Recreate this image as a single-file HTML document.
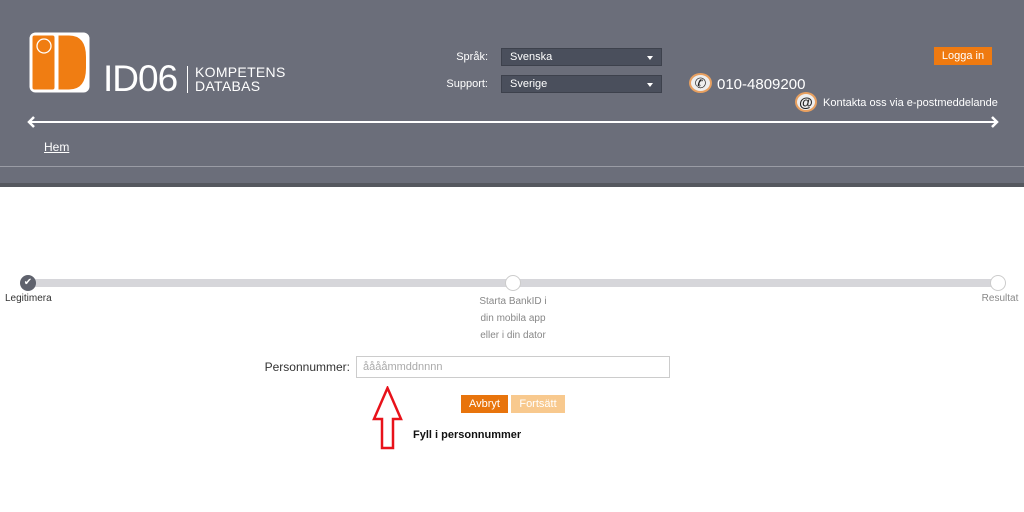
<!DOCTYPE html>
<html><head><meta charset="utf-8"><style>
*{margin:0;padding:0;box-sizing:border-box}
body{width:1024px;height:512px;background:#fff;font-family:"Liberation Sans",sans-serif;position:relative;overflow:hidden}
.hd{position:absolute;left:0;top:0;width:1024px;height:187px;background:#6b6e7a}
.ab{position:absolute}
.sel{position:absolute;left:501px;width:161px;height:18px;background:#4a4f5c;border:1px solid #3d414c;color:#fff;font-size:11px;padding:2px 8px;}
.sel:after{content:"";position:absolute;right:8px;top:7px;border:3px solid transparent;border-top:4px solid #fff}
.lbl{position:absolute;color:#fff;font-size:11px;text-align:right;width:80px;left:408px}
.t{position:absolute;color:#888;font-size:10px;text-align:center}
</style></head><body>
<div class="hd">
 <svg class="ab" style="left:29px;top:32px" width="61" height="61" viewBox="0 0 61 61">
  <rect x="0.5" y="0.5" width="60" height="60" rx="6" fill="#fff"/>
  <rect x="3.5" y="3.5" width="22" height="54" rx="2" fill="#f07d12"/>
  <path d="M29.5 3.5 H40 Q57 3.5 57 25 V36 Q57 57.5 40 57.5 H29.5 Z" fill="#f07d12"/>
  <circle cx="15" cy="14" r="7" fill="none" stroke="#fff" stroke-width="1.3"/>
 </svg>
 <div class="ab" style="left:103px;top:58px;color:#fff;font-size:37px;letter-spacing:-1px">ID06</div>
 <div class="ab" style="left:187px;top:66px;width:1px;height:27px;background:#fff"></div>
 <div class="ab" style="left:195px;top:65px;color:#fff;font-size:14px;line-height:14px;letter-spacing:0.3px">KOMPETENS<br>DATABAS</div>
 <div class="lbl" style="top:51px">Språk:</div>
 <div class="sel" style="top:48px">Svenska</div>
 <div class="lbl" style="top:78px">Support:</div>
 <div class="sel" style="top:75px">Sverige</div>
 <div class="ab" style="left:689px;top:73px;width:23px;height:20px;border-radius:50%;background:#eee;border:2px solid #e8a060;color:#222;font-size:14px;text-align:center;line-height:16px">✆</div>
 <div class="ab" style="left:717px;top:76px;color:#fff;font-size:15px">010-4809200</div>
 <div class="ab" style="left:795px;top:92px;width:22px;height:20px;border-radius:50%;background:#eee;border:2px solid #e8a060;color:#222;font-size:14px;text-align:center;line-height:16px;font-weight:bold">@</div>
 <div class="ab" style="left:823px;top:97px;color:#fff;font-size:11px">Kontakta oss via e-postmeddelande</div>
 <div class="ab" style="left:934px;top:47px;width:58px;height:18px;background:#ef7a10;color:#fff;font-size:11px;text-align:center;line-height:18px">Logga in</div>
 <div class="ab" style="left:30px;top:121px;width:966px;height:2px;background:#fff"></div>
 <svg class="ab" style="left:26px;top:116px" width="10" height="12"><path d="M8 1 L3 6 L8 11" fill="none" stroke="#fff" stroke-width="2.5"/></svg>
 <svg class="ab" style="left:990px;top:116px" width="10" height="12"><path d="M2 1 L7 6 L2 11" fill="none" stroke="#fff" stroke-width="2.5"/></svg>
 <div class="ab" style="left:44px;top:140px;color:#fff;font-size:12px;text-decoration:underline">Hem</div>
 <div class="ab" style="left:0;top:166px;width:1024px;height:1px;background:#9a9ca5"></div>
 <div class="ab" style="left:0;top:183px;width:1024px;height:4px;background:#55585f"></div>
</div>
<div class="ab" style="left:28px;top:279px;width:970px;height:8px;background:#d6d6da"></div>
<div class="ab" style="left:20px;top:275px;width:16px;height:16px;border-radius:50%;background:#5f626d;color:#fff;font-size:10px;text-align:center;line-height:16px">✔</div>
<div class="ab" style="left:505px;top:275px;width:16px;height:16px;border-radius:50%;background:#fff;border:1px solid #ccc"></div>
<div class="ab" style="left:990px;top:275px;width:16px;height:16px;border-radius:50%;background:#fff;border:1px solid #ccc"></div>
<div class="ab" style="left:5px;top:293px;font-size:10px;color:#333">Legitimera</div>
<div class="t" style="left:458px;top:293px;width:110px;line-height:17px">Starta BankID i<br>din mobila app<br>eller i din dator</div>
<div class="t" style="left:975px;top:293px;width:50px">Resultat</div>
<div class="ab" style="left:250px;top:360px;width:100px;text-align:right;font-size:12px;color:#333">Personnummer:</div>
<div class="ab" style="left:356px;top:356px;width:314px;height:22px;border:1px solid #ccc;font-size:11px;color:#aaa;padding:4px 6px">ååååmmddnnnn</div>
<div class="ab" style="left:461px;top:395px;width:47px;height:18px;background:#e8740c;color:#fff;font-size:11px;text-align:center;line-height:18px">Avbryt</div>
<div class="ab" style="left:511px;top:395px;width:54px;height:18px;background:#f8c98e;color:#fff;font-size:11px;text-align:center;line-height:18px">Fortsätt</div>
<svg class="ab" style="left:372px;top:386px" width="31" height="64"><path d="M15.5 2 L29 33 H21 V62 H10 V33 H2 Z" fill="#fff" stroke="#e8121a" stroke-width="2.5"/></svg>
<div class="ab" style="left:413px;top:429px;font-size:11px;font-weight:bold;color:#111">Fyll i personnummer</div>
</body></html>
